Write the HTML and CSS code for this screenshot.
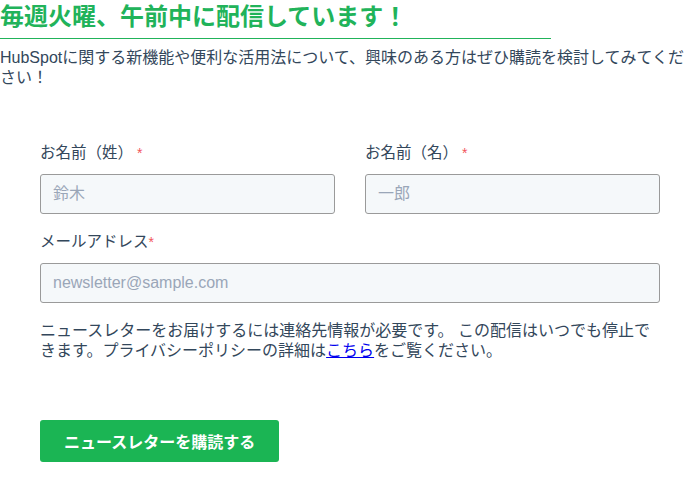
FILE: index.html
```html
<!DOCTYPE html>
<html lang="ja">
<head>
<meta charset="utf-8">
<link rel="stylesheet" href="styles.css">
</head>
<body>
<div class="page">
  <h1 class="title">毎週火曜、午前中に配信しています！</h1>
  <hr class="rule">
  <p class="lead">HubSpotに関する新機能や便利な活用法について、興味のある方はぜひ購読を検討してみてください！</p>
  <form class="form">
    <div class="row two">
      <div class="field">
        <label class="label">お名前（姓）<span class="req">*</span></label>
        <input class="input" type="text" placeholder="鈴木">
      </div>
      <div class="field">
        <label class="label">お名前（名）<span class="req">*</span></label>
        <input class="input" type="text" placeholder="一郎">
      </div>
    </div>
    <div class="row">
      <div class="field">
        <label class="label">メールアドレス<span class="req tight">*</span></label>
        <input class="input" type="email" placeholder="newsletter@sample.com">
      </div>
    </div>
    <p class="note">ニュースレターをお届けするには連絡先情報が必要です。 この配信はいつでも停止できます。プライバシーポリシーの詳細は<a href="#" class="link">こちら</a>をご覧ください。</p>
    <button type="button" class="btn">ニュースレターを購読する</button>
  </form>
</div>
</body>
</html>
```
FILE: styles.css
```css
* { box-sizing: border-box; }
html, body { margin: 0; padding: 0; background: #fff; }
body {
  font-family: "Liberation Sans", "Noto Sans CJK JP", sans-serif;
  color: #33475b;
}
.page { width: 700px; }
.title {
  margin: 0;
  font-size: 24px;
  line-height: 33px;
  font-weight: 700;
  color: #21b35a;
}
.rule {
  margin: 5px 0 0 0;
  width: 551px;
  border: 0;
  height: 1px;
  background: #21b35a;
}
.lead {
  margin: 9px 0 0 0;
  font-size: 16px;
  line-height: 20px;
  color: #33475b;
}
.form {
  padding: 55px 40px 0 40px;
  width: 700px;
}
.row { display: flex; gap: 30px; margin-bottom: 18px; }
.row.two .field { width: 295px; }
.row .field { width: 620px; }
.label {
  display: block;
  font-size: 15.5px;
  line-height: 20px;
  color: #33475b;
  margin-bottom: 11px;
}
.req { color: #f2545b; font-size: 14px; margin-left: 4px; vertical-align: top; }
.req.tight { margin-left: 0; }
.input {
  display: block;
  width: 100%;
  height: 40px;
  border: 1px solid #9a9a9a;
  border-radius: 3px;
  background: #f5f8fa;
  padding: 0 12px;
  font-family: "Liberation Sans", "Noto Sans CJK JP", sans-serif;
  font-size: 16px;
  color: #33475b;
}
.input::placeholder { color: #9aa6b8; }
.note {
  margin: 18px 0 0 0;
  font-size: 16px;
  line-height: 20px;
  color: #33475b;
}
.link { color: #0000ee; text-decoration: underline; }
.btn {
  margin-top: 59px;
  display: block;
  height: 42px;
  padding: 0 24px;
  border: 0;
  border-radius: 3px;
  background: #1bb554;
  color: #fff;
  font-family: "Liberation Sans", "Noto Sans CJK JP", sans-serif;
  font-size: 16px;
  font-weight: 700;
}
```
